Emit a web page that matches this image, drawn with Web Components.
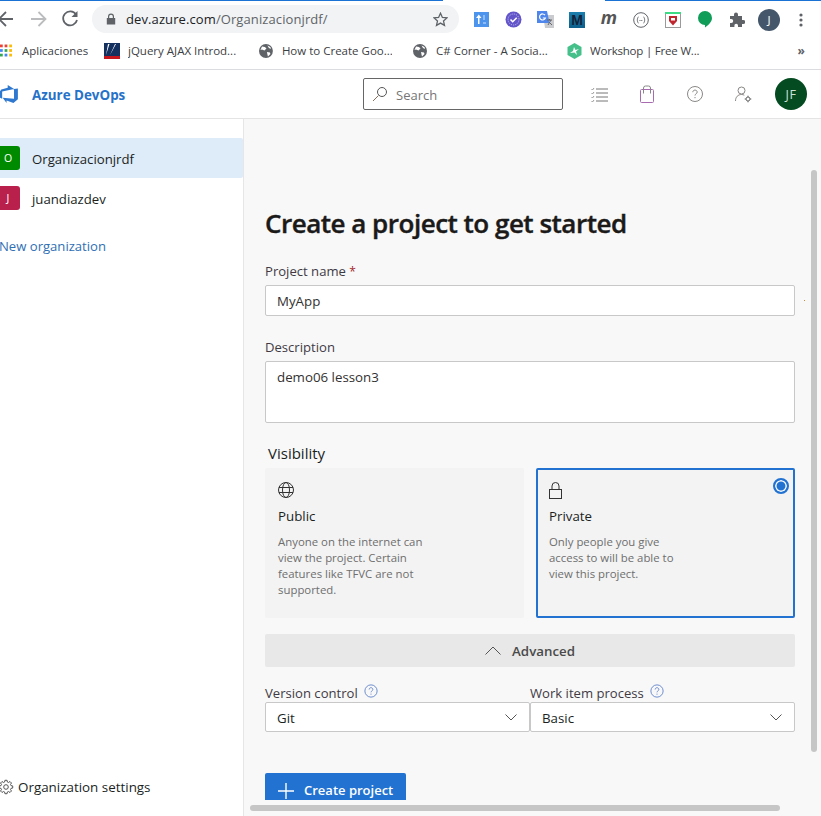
<!DOCTYPE html>
<html lang="en">
<head>
<meta charset="utf-8">
<title>Azure DevOps</title>
<style>
  html, body { margin: 0; height: 816px; overflow: hidden; background: #fff; }
  body { font-family: "Open Sans", "Liberation Sans", sans-serif; color: #201f1e; }
</style>
</head>
<body>
<browser-toolbar url-host="dev.azure.com" url-path="/Organizacionjrdf/"></browser-toolbar>
<bookmark-bar></bookmark-bar>
<ado-header></ado-header>
<ado-shell>
  <org-nav slot="nav">
    <org-item letter="O" color="#008a00" selected>Organizacionjrdf</org-item>
    <org-item letter="J" color="#b9204c">juandiazdev</org-item>
  </org-nav>
  <create-project></create-project>
</ado-shell>

<script>
const ICONS = {
  globe: `<svg width="14" height="14" viewBox="0 0 14 14"><circle cx="7" cy="7" r="7" fill="#5f6368"/><path d="M3 2.500l3 .5 1.500 1.500-2 2L3 5.500 1.500 6zM8 8l3 .5.5 1.500-2.500 2.500L8.500 10.500zM8.500 1.500l3 1.500.5 2-2-1z" fill="#fff"/></svg>`,
  help: `<svg width="16" height="16" viewBox="0 0 16 16" fill="none" stroke="currentColor"><circle cx="8" cy="8" r="7"/><path d="M5.900 6.300c0-1.300 1-2.100 2.100-2.100s2.100.8 2.100 2c0 1.700-2.100 1.700-2.100 3.300"/><path d="M8 11v1.200"/></svg>`,
  chevron: `<svg width="12" height="7" viewBox="0 0 12 7" fill="none" stroke="#555"><path d="M.5.500L6 6l5.500-5.500"/></svg>`
};

// outlined 8 tooth gear, same as the settings icon in the nav
function gearPoints(cx, cy, outer, inner) {
  const pts = [];
  for (let i = 0; i < 8; i++) {
    const a = i * Math.PI / 4;
    [[-.26, inner], [-.16, outer], [.16, outer], [.26, inner]].forEach(([d, r]) => {
      pts.push((cx + r * Math.cos(a + d)).toFixed(2) + ',' + (cy + r * Math.sin(a + d)).toFixed(2));
    });
  }
  return pts.join(' ');
}

class BrowserToolbar extends HTMLElement {
  constructor() {
    super();
    this.attachShadow({mode: 'open'});
    this.#Render();
  }
  #Render() {
    this.shadowRoot.innerHTML = `
    <style>
      :host { display: block; height: 34px; background: #fff; position: relative; font-family: "Open Sans", sans-serif; }
      .strip { display: flex; height: 1px; margin-bottom: 1px; }
      .strip i { background: #1a73d4; }
      .strip .a { width: 443px; }
      .strip .b { flex: 1; background: #fff; }
      .strip .c { width: 216px; }
      .bar { display: flex; align-items: center; height: 32px; }
      .nav { display: flex; align-items: center; width: 92px; height: 32px; }
      .omni { width: 367px; height: 28px; margin-top: 2px; border-radius: 14px; background: #f1f3f4; display: flex; align-items: center; box-sizing: border-box; padding-left: 14px; }
      .url { margin-left: 10px; font-size: 13px; white-space: nowrap; color: #5f6368; letter-spacing: .1px; }
      .url b { font-weight: 400; color: #202124; }
      .star { margin-left: auto; margin-right: 11px; display: flex; }
      .exts { margin-left: 6px; display: flex; }
      .slot { width: 32px; height: 32px; margin-top: 3px; display: flex; align-items: center; justify-content: center; position: relative; }
      .m1 { font: 700 14px "Liberation Sans", sans-serif; color: #14233a; background: linear-gradient(#1b7fae, #0c5f8a); width: 16px; height: 16px; display: flex; align-items: center; justify-content: center; }
      .m2 { font: italic 700 18px "Open Sans", sans-serif; color: #555; line-height: 16px; margin-top: -5px; }
      .me { width: 22px; height: 22px; border-radius: 50%; background: #44566a; color: #fff; font-size: 11.500px; display: flex; align-items: center; justify-content: center; }
    </style>
    <div class="strip"><i class="a"></i><i class="b"></i><i class="c"></i></div>
    <div class="bar">
      <div class="nav">
        <svg width="92" height="32" viewBox="0 0 92 32" fill="none" stroke-width="1.800">
          <path d="M13 17H-1M6 10l-7 7 7 7" stroke="#5f6368"/>
          <path d="M31 17h14M38.500 10l7 7-7 7" stroke="#babcbe"/>
          <path d="M76 12.500a7 7 0 1 0 1 5.500" stroke="#5f6368"/>
          <path d="M77.500 9v6h-6z" fill="#5f6368"/>
        </svg>
      </div>
      <div class="omni">
        <svg width="10" height="12" viewBox="0 0 10 12"><path d="M2 5V3.500a3 3 0 0 1 6 0V5h1.200v6.500H.8V5zM3.200 5h3.600V3.500a1.800 1.800 0 0 0-3.600 0z" fill="#5f6368"/></svg>
        <span class="url"><b>${this.getAttribute('url-host')}</b>${this.getAttribute('url-path')}</span>
        <span class="star"><svg width="15" height="15" viewBox="0 0 15 15" fill="none" stroke="#5f6368" stroke-width="1.300"><path d="M7.500 1.200l1.900 4.200 4.500.5-3.400 3 1 4.500-4-2.300-4 2.300 1-4.500-3.400-3 4.500-.5z"/></svg></span>
      </div>
      <div class="exts">
        <div class="slot"><svg width="15" height="15" viewBox="0 0 15 15"><rect width="15" height="15" fill="#4d94ec"/><path d="M4 12V6H2l2.800-3.500L7.500 6h-2v6z" fill="#fff"/><path d="M10 3v5M9 11h3" stroke="#cfe2fb"/></svg></div>
        <div class="slot"><svg width="17" height="17" viewBox="0 0 17 17"><circle cx="8.500" cy="8.500" r="8" fill="#6254c9"/><circle cx="8.500" cy="8.500" r="5.500" fill="none" stroke="#c5bff0" stroke-dasharray="1 1"/><path d="M5.500 8.500l2.200 2.200 4-4" fill="none" stroke="#fff" stroke-width="1.600"/></svg></div>
        <div class="slot"><svg width="17" height="17" viewBox="0 0 17 17"><path d="M6 4h11v13H8z" fill="#c9cbce"/><path d="M0 0h10l2.500 12H0z" fill="#4f86ec"/><path d="M8 4.200a3 3 0 1 0 .4 2.800H5.800" fill="none" stroke="#fff" stroke-width="1.200"/><path d="M10 9h5M12.500 8v1.500M11 14l3-5M12 11l3 3" stroke="#666" fill="none"/></svg></div>
        <div class="slot"><span class="m1">M</span></div>
        <div class="slot"><span class="m2">m</span></div>
        <div class="slot"><svg width="16" height="16" viewBox="0 0 16 16" fill="none" stroke="#5f6368"><circle cx="8" cy="8" r="7.300"/><path d="M5.500 5c-1.200 0-.8 3-1.500 3 .7 0 .3 3 1.500 3M10.500 5c1.200 0 .8 3 1.500 3-.7 0-.3 3-1.500 3"/><path d="M6.500 8.500h3" stroke-dasharray="1 .8"/></svg></div>
        <div class="slot"><svg width="16" height="16" viewBox="0 0 16 16"><rect x=".5" y=".5" width="15" height="15" fill="#fff" stroke="#9a9a9a"/><rect width="16" height="2" fill="#3ddc84"/><path d="M4 4h8v5l-4 4.500L4 9z" fill="#c0262d"/><rect x="6" y="6" width="4" height="2.500" fill="#fff"/></svg></div>
        <div class="slot"><svg width="14" height="17" viewBox="0 0 14 17"><path d="M7 0a7 7 0 0 1 7 7c0 3.800-3.500 7-7 9.500V14a7 7 0 0 1 0-14z" fill="#0f9d58"/></svg></div>
        <div class="slot"><svg width="15" height="15" viewBox="0 0 15 15"><path d="M0 4h4V2.500a2 2 0 0 1 4 0V4h4v4h1.300a2 2 0 0 1 0 4H12v3H8v-1.500a1.800 1.800 0 0 0-3.600 0V15H0v-4h1.200a2 2 0 0 0 0-4H0z" fill="#5f6368"/></svg></div>
        <div class="slot"><span class="me">J</span></div>
        <div class="slot"><svg width="4" height="14" viewBox="0 0 4 14" fill="#5f6368"><circle cx="2" cy="2" r="1.600"/><circle cx="2" cy="7" r="1.600"/><circle cx="2" cy="12" r="1.600"/></svg></div>
      </div>
    </div>`;
  }
}
customElements.define('browser-toolbar', BrowserToolbar);

class BookmarkBar extends HTMLElement {
  constructor() {
    super();
    this.attachShadow({mode: 'open'});
    const dots = ['#ea4335','#ea4335','#fbbc05','#4285f4','#34a853','#fbbc05','#34a853','#4285f4','#fbbc05'];
    let apps = '';
    dots.forEach((c, i) => {
      apps += `<rect x="${(i % 3) * 5}" y="${Math.floor(i / 3) * 5}" width="3" height="3" fill="${c}"/>`;
    });
    this.shadowRoot.innerHTML = `
    <style>
      :host { display: block; height: 36px; border-bottom: 1px solid #dadce0; box-sizing: border-box; font-family: "Open Sans", sans-serif; }
      .row { display: flex; align-items: center; height: 33px; font-size: 11.500px; color: #3c4043; white-space: nowrap; }
      .mark { display: flex; align-items: center; gap: 9px; }
      .t { overflow: hidden; }
      .more { margin-left: auto; margin-right: 16px; color: #5f6368; font-size: 12px; font-weight: 700; margin-top: -1px; }
    </style>
    <div class="row">
      <div class="mark" style="gap:10px;width:88px"><svg width="12" height="13" viewBox="0 0 13 13">${apps}</svg><span class="t">Aplicaciones</span></div>
      <div class="mark" style="margin-left:16px;width:135px;gap:8px"><svg width="16" height="16" viewBox="0 0 16 16"><rect width="16" height="16" fill="#14305e"/><rect y="13" width="16" height="3" fill="#c4161c"/><path d="M2 12L4 1h1.500zM6 12l5-11h1z" fill="#fff"/></svg><span class="t">jQuery AJAX Introd...</span></div>
      <div class="mark" style="margin-left:20px;width:133px">${ICONS.globe}<span class="t">How to Create Goo...</span></div>
      <div class="mark" style="margin-left:21px;width:136px">${ICONS.globe}<span class="t">C# Corner - A Socia...</span></div>
      <div class="mark" style="margin-left:18px;gap:8px"><svg width="15" height="16" viewBox="0 0 15 16"><path d="M7.500 0l7 4v8l-7 4-7-4V4z" fill="#46c08a"/><path d="M3 10l3-2 1-4 1.500 3L12 6 9 8.500l1 3.500-2.500-2.500z" fill="#fff"/></svg><span class="t" style="letter-spacing:-.2px">Workshop | Free W...</span></div>
      <span class="more">&raquo;</span>
    </div>`;
  }
}
customElements.define('bookmark-bar', BookmarkBar);

class AdoHeader extends HTMLElement {
  constructor() {
    super();
    this.attachShadow({mode: 'open'});
    this.shadowRoot.innerHTML = `
    <style>
      :host { display: block; height: 49px; border-bottom: 1px solid #e4e4e4; box-sizing: border-box; font-family: "Open Sans", sans-serif; }
      .row { display: flex; align-items: center; height: 48px; }
      .logo { margin-left: -1px; display: flex; }
      .name { margin-left: 13px; width: 331px; color: #2672c9; font-size: 13.400px; font-weight: 700; white-space: nowrap; padding-top: 1px; }
      .search { width: 200px; height: 32px; box-sizing: border-box; border: 1px solid #666; border-radius: 2px; display: flex; align-items: center; padding-left: 8px; gap: 8px; color: #767676; font-size: 13px; }
      .search span { padding-top: 1px; }
      .tools { display: flex; margin-left: 12px; align-items: center; }
      .tool { width: 48px; height: 32px; display: flex; align-items: center; justify-content: center; color: #8a8886; }
      .avatar { width: 32px; height: 32px; border-radius: 50%; background: #054b21; color: #cfe0d5; font-size: 12.500px; display: flex; align-items: center; justify-content: center; margin-left: 8px; letter-spacing: .5px; }
    </style>
    <div class="row">
      <span class="logo"><svg width="20" height="20" viewBox="0 0 18 18"><path fill="#2f78cf" d="M17 4v9.740l-4 3.280-6.200-2.260V17l-3.510-4.590 10.230.8V4.440zm-3.410.49L7.850 1v2.290L2.080 5 .37 7.200v5l2.480 1V6.740z"/></svg></span>
      <span class="name">Azure DevOps</span>
      <div class="search">
        <svg width="16" height="16" viewBox="0 0 16 16" fill="none"><circle cx="10" cy="6" r="4.500" stroke="#555"/><path d="M6.500 9.500L1 15" stroke="#8a6d5a"/></svg>
        <span>Search</span>
      </div>
      <div class="tools">
        <span class="tool"><svg width="17" height="15" viewBox="0 0 17 15" fill="none" stroke="#777"><path d="M5 2h12M5 6h12M5 10h12M5 14h12"/><path d="M.5 2l1 1 1.500-2M.5 6l1 1 1.500-2M.5 10l1 1 1.500-2M.5 14l1 1 1.500-2" stroke="#999"/></svg></span>
        <span class="tool"><svg width="14" height="18" viewBox="0 0 14 18" fill="none" stroke="#a86bb0"><rect x=".5" y="4.500" width="13" height="13" rx="1"/><path d="M3.500 4.500V3a2 2 0 0 1 2-2h3a2 2 0 0 1 2 2v1.500" stroke="#888"/><path d="M3.500 4.500v4" stroke="#888"/><path d="M10.500 4.500v4" stroke="#888"/></svg></span>
        <span class="tool"><svg width="16" height="16" viewBox="0 0 16 16" fill="none" stroke="#8a8886"><circle cx="8" cy="8" r="7.500"/><path d="M5.800 6.200c0-1.300 1-2.100 2.200-2.100s2.200.8 2.200 2c0 1.700-2.200 1.700-2.200 3.400M8 11v1.200"/></svg></span>
        <span class="tool"><svg width="17" height="17" viewBox="0 0 17 17" fill="none" stroke="#8a8886"><circle cx="6.500" cy="4.500" r="3.500"/><path d="M.5 15c0-4 2.500-6.500 6-6.500 1 0 2 .2 2.800.7"/><circle cx="13" cy="13" r="2" stroke="#666"/><path d="M13 9.700v1.300M13 15v1.300M9.700 13H11M15 13h1.300" stroke="#666"/></svg></span>
      </div>
      <span class="avatar">JF</span>
    </div>`;
  }
}
customElements.define('ado-header', AdoHeader);

class AdoShell extends HTMLElement {
  constructor() {
    super();
    this.attachShadow({mode: 'open'});
    this.shadowRoot.innerHTML = `
    <style>
      :host { display: flex; height: 697px; position: relative; background: #f8f8f8; overflow: hidden; }
      .main { flex: 1; height: 681px; overflow: hidden; }
      .vbar { position: absolute; left: 811px; top: 51px; width: 6px; height: 582px; border-radius: 3px; background: #c6c6c6; }
      .hbar { position: absolute; left: 250px; top: 686px; width: 530px; height: 6px; border-radius: 3px; background: #c6c6c6; }
      .spot { position: absolute; left: 804px; top: 181px; width: 1px; height: 1px; background: #c98a3a; }
    </style>
    <slot name="nav"></slot>
    <div class="main"><slot></slot></div>
    <i class="vbar"></i><i class="hbar"></i><i class="spot"></i>`;
  }
}
customElements.define('ado-shell', AdoShell);

class OrgNav extends HTMLElement {
  constructor() {
    super();
    this.attachShadow({mode: 'open'});
    this.shadowRoot.innerHTML = `
    <style>
      :host { display: flex; flex-direction: column; width: 244px; flex: none; box-sizing: border-box; height: 697px; background: #fff; border-right: 1px solid #e6e6e6; padding-top: 19px; font-family: "Open Sans", sans-serif; font-size: 13.200px; color: #201f1e; }
      .new { margin: 18px 0 0 -1px; line-height: 20px; color: #2f6fb5; font-size: 13.100px; }
      .settings { margin-top: auto; margin-bottom: 19px; display: flex; align-items: center; gap: 6px; line-height: 20px; font-size: 13.400px; }
      .settings svg { flex: none; }
    </style>
    <slot></slot>
    <span class="new">New organization</span>
    <div class="settings">
      <svg width="12" height="14" viewBox="0 0 12 14" fill="none" stroke="#555" style="overflow:visible"><polygon points="${gearPoints(6, 7, 6.800, 5.200)}"/><circle cx="6" cy="7" r="2.300"/></svg>
      <span>Organization settings</span>
    </div>`;
  }
}
customElements.define('org-nav', OrgNav);

class OrgItem extends HTMLElement {
  constructor() {
    super();
    this.attachShadow({mode: 'open'});
    this.shadowRoot.innerHTML = `
    <style>
      :host { display: flex; align-items: center; height: 40px; gap: 12px; border-radius: 0 2px 2px 0; }
      :host([selected]) { background: #deebf8; }
      .tile { width: 24px; height: 24px; margin-left: -4px; border-radius: 3px; color: #fff; font-size: 10.500px; display: flex; align-items: center; justify-content: center; }
      .label { padding-top: 2px; }
    </style>
    <span class="tile"></span><span class="label"><slot></slot></span>`;
  }
  connectedCallback() {
    const tile = this.shadowRoot.querySelector('.tile');
    tile.textContent = this.getAttribute('letter');
    tile.style.background = this.getAttribute('color');
  }
}
customElements.define('org-item', OrgItem);

class VisibilityCard extends HTMLElement {
  constructor() {
    super();
    this.attachShadow({mode: 'open'});
    this.shadowRoot.innerHTML = `
    <style>
      :host { display: block; position: relative; box-sizing: border-box; height: 150px; background: #f3f3f3; padding: 12px 13px; border-radius: 2px; }
      :host([selected]) { border: 2px solid #2272d2; padding: 10px 11px; }
      .icon { height: 20px; display: flex; align-items: center; }
      .title { margin-top: 6px; line-height: 20px; font-size: 13.300px; color: #201f1e; }
      .desc { margin-top: 8px; font-size: 11.400px; line-height: 16px; color: #6e6e6e; white-space: nowrap; }
      .radio { display: none; position: absolute; right: 4px; top: 8px; width: 16px; height: 16px; box-sizing: border-box; border: 2px solid #2272d2; border-radius: 50%; background: #2272d2; box-shadow: inset 0 0 0 1.500px #fff; }
      :host([selected]) .radio { display: block; }
    </style>
    <div class="icon"><slot name="icon"></slot></div>
    <div class="title"><slot name="title"></slot></div>
    <div class="desc"><slot></slot></div>
    <i class="radio"></i>`;
  }
}
customElements.define('visibility-card', VisibilityCard);

class TextBox extends HTMLElement {
  constructor() {
    super();
    this.attachShadow({mode: 'open'});
    this.shadowRoot.innerHTML = `
    <style>
      :host { display: block; box-sizing: border-box; height: 31px; background: #fff; border: 1px solid #c8c8c8; border-radius: 2px; padding: 1px 11px 0; line-height: 29px; font-size: 13.300px; color: #323130; }
    </style>
    <slot></slot>`;
  }
}
customElements.define('text-box', TextBox);

class SelectBox extends HTMLElement {
  constructor() {
    super();
    this.attachShadow({mode: 'open'});
    this.shadowRoot.innerHTML = `
    <style>
      :host { display: flex; align-items: center; justify-content: space-between; box-sizing: border-box; height: 30px; background: #fff; border: 1px solid #c8c8c8; border-radius: 2px; padding: 0 12px 0 11px; font-size: 13.300px; color: #201f1e; }
      span { padding-top: 2px; }
    </style>
    <span><slot></slot></span>${ICONS.chevron}`;
  }
}
customElements.define('select-box', SelectBox);

class CreateProject extends HTMLElement {
  constructor() {
    super();
    this.attachShadow({mode: 'open'});
    this.shadowRoot.innerHTML = `
    <style>
      :host { display: block; box-sizing: border-box; padding: 84px 0 0 21px; width: 551px; font-family: "Open Sans", sans-serif; }
      h1 { margin: 0; font-size: 26px; line-height: 40px; font-weight: 600; color: #1b1a19; letter-spacing: -.5px; -webkit-text-stroke: .4px #1b1a19; white-space: nowrap; }
      label { display: block; font-size: 13.100px; line-height: 20px; color: #3f3a44; }
      label em { font-style: normal; color: #a4262c; font-size: 12px; line-height: 0; }
      .name-label { margin-top: 18px; margin-bottom: 4px; }
      .desc-label { margin-top: 21px; margin-bottom: 4px; }
      text-box.area { height: 62px; }
      .vis { margin: 19px 0 4px 3px; font-size: 15px; line-height: 22px; color: #201f1e; }
      .cards { display: grid; grid-template-columns: 1fr 1fr; gap: 12px; }
      .advanced { margin-top: 16px; height: 33px; background: #e8e8e8; border-radius: 2px; display: flex; align-items: center; justify-content: center; gap: 11px; font-size: 13.300px; font-weight: 600; color: #4a4a4a; }
      .pickers { margin-top: 17px; display: grid; grid-template-columns: 1fr 1fr; }
      .pick-label { display: flex; align-items: center; gap: 6px; line-height: 18px; height: 18px; color: #3f3a44; font-size: 13.100px; }
      .pick-label span { color: #5b7fc7; display: flex; margin-top: -5px; }
      .pick-label svg { width: 14px; height: 14px; }
      .create { margin-top: 41px; width: 141px; height: 36px; background: #2272d2; color: #fff; border-radius: 2px; display: flex; align-items: flex-start; gap: 9px; padding: 7px 0 0 12px; box-sizing: border-box; font-size: 13px; font-weight: 600; line-height: 20px; }
      svg { display: block; }
    </style>
    <h1>Create a project to get started</h1>
    <label class="name-label">Project name <em>*</em></label>
    <text-box>MyApp</text-box>
    <label class="desc-label">Description</label>
    <text-box class="area">demo06 lesson3</text-box>
    <div class="vis">Visibility</div>
    <div class="cards">
      <visibility-card>
        <svg slot="icon" width="16" height="16" viewBox="0 0 16 16" fill="none" stroke="#333"><circle cx="8" cy="8" r="7.500"/><ellipse cx="8" cy="8" rx="3.500" ry="7.500"/><path d="M1 5.500h14M1 10.500h14"/></svg>
        <span slot="title">Public</span>
        Anyone on the internet can<br>view the project. Certain<br>features like TFVC are not<br>supported.
      </visibility-card>
      <visibility-card selected>
        <svg slot="icon" width="13" height="17" viewBox="0 0 13 17" fill="none" stroke="#333"><rect x=".5" y="7.500" width="12" height="9"/><path d="M3 7.500V4a3.500 3.500 0 0 1 7 0v3.500"/></svg>
        <span slot="title">Private</span>
        Only people you give<br>access to will be able to<br>view this project.
      </visibility-card>
    </div>
    <div class="advanced">
      <svg width="16" height="9" viewBox="0 0 16 9" fill="none" stroke="#555"><path d="M.5 8.500L8 1l7.500 7.500"/></svg>
      <span>Advanced</span>
    </div>
    <div class="pickers">
      <div>
        <div class="pick-label">Version control <span>${ICONS.help}</span></div>
        <select-box>Git</select-box>
      </div>
      <div>
        <div class="pick-label">Work item process <span>${ICONS.help}</span></div>
        <select-box>Basic</select-box>
      </div>
    </div>
    <div class="create">
      <svg width="18" height="18" viewBox="0 0 18 18" stroke="#fff" stroke-width="1.400" style="margin-top:2px"><path d="M9 1v16M1 9h16"/></svg>
      <span>Create project</span>
    </div>`;
  }
}
customElements.define('create-project', CreateProject);
</script>
</body>
</html>
